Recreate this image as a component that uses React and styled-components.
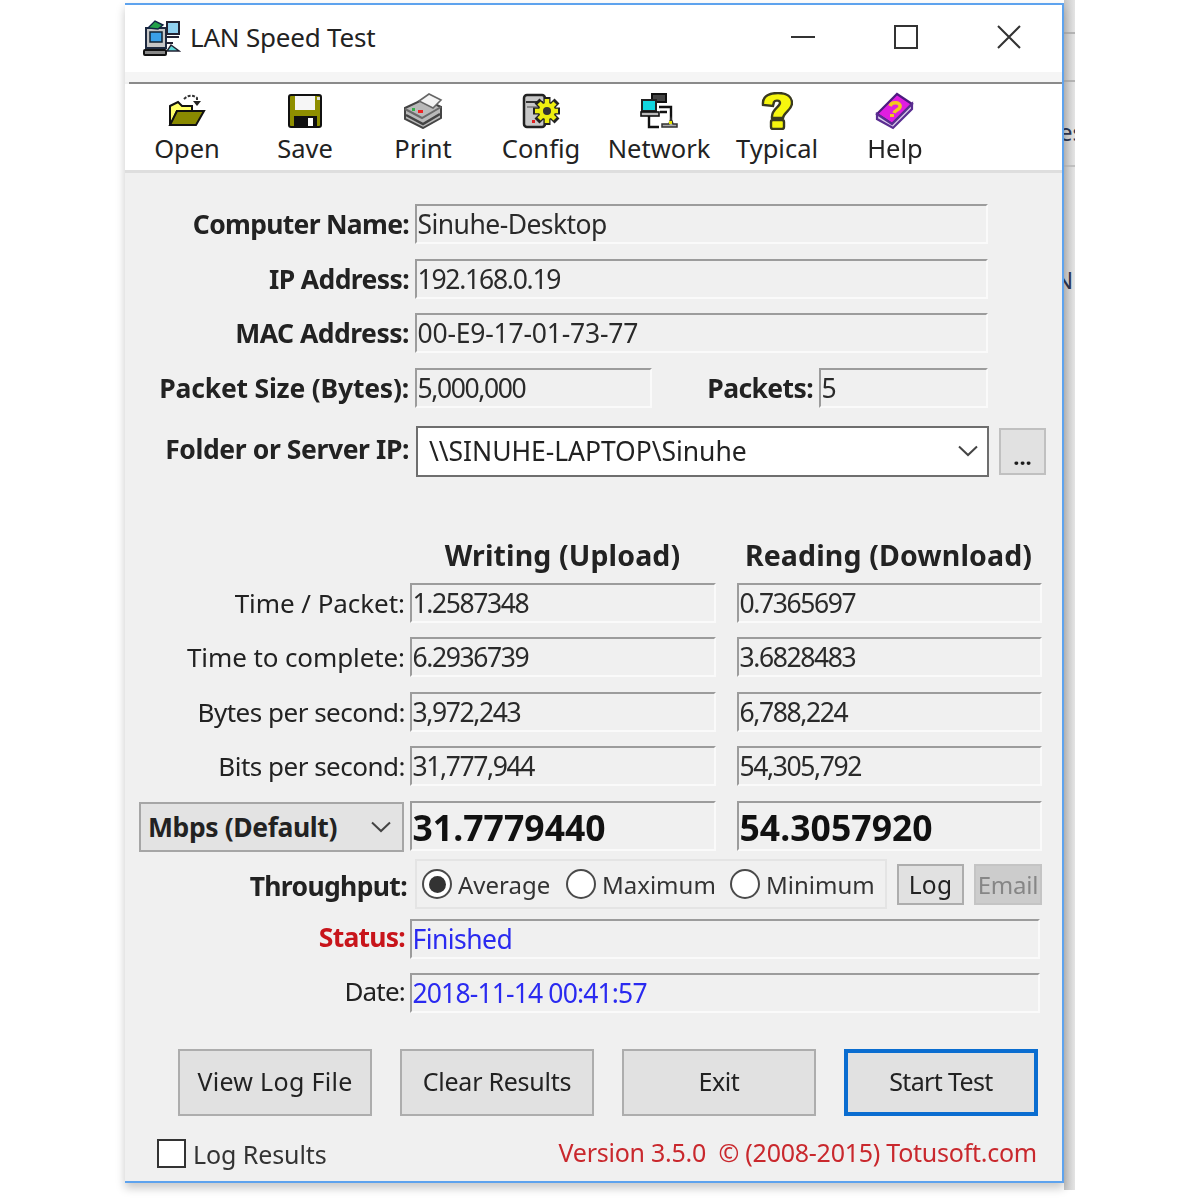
import React from "react"
import styled, { createGlobalStyle } from "styled-components"

const Global = createGlobalStyle`
  html, body { margin: 0; padding: 0; background: #fff; }
  body { font-family: "Noto Sans", "Open Sans", sans-serif; color: #1c1c1c; }
`

const Stage = styled.div`
  display: flex;
  align-items: flex-start;
  width: 1200px;
  height: 1200px;
  padding-left: 125px;
  box-sizing: border-box;
  overflow: hidden;
  filter: blur(0.55px);
`

const Win = styled.div`
  position: relative;
  z-index: 1;
  width: 939px;
  height: 1180px;
  margin-top: 3px;
  flex: none;
  box-sizing: border-box;
  border: 2px solid #5ea3ee;
  border-left-width: 0;
  background: #f0f0f0;
  box-shadow: 0 5px 9px rgba(0, 0, 0, 0.22);
  display: flex;
  flex-direction: column;
`

const Behind = styled.div`
  position: relative;
  width: 11px;
  height: 1190px;
  flex: none;
  overflow: hidden;
  background:
    linear-gradient(#b4b4b4, #b4b4b4) 0 32px / 100% 2px no-repeat,
    linear-gradient(#b4b4b4, #b4b4b4) 0 80px / 100% 2px no-repeat,
    linear-gradient(#c0c0c0, #c0c0c0) 0 165px / 100% 2px no-repeat,
    linear-gradient(90deg, #c6c6c6, #e4e4e4);
`

const BehindText = styled.span`
  position: absolute;
  left: ${p => p.$left}px;
  top: ${p => p.$top}px;
  font-size: 24px;
  line-height: 28px;
  color: #2c3550;
  white-space: nowrap;
`

const TitleBar = styled.div`
  height: 67px;
  flex: none;
  display: flex;
  align-items: center;
  background: #fff;
  padding: 0 2px 0 18px;
`

const AppIcon = styled.svg`
  width: 38px;
  height: 38px;
  flex: none;
  margin-top: -2px;
`

const TitleText = styled.div`
  margin: 0 0 4px 9px;
  font-size: 26px;
  letter-spacing: -0.2px;
  color: #222;
  flex: 1;
`

const WinBtn = styled.div`
  width: 103px;
  height: 50px;
  display: flex;
  align-items: center;
  justify-content: center;
  margin-top: -4px;
`

const TitleGap = styled.div`
  height: 10px;
  flex: none;
  background: #f5f5f5;
`

const TitleRule = styled.div`
  height: 2px;
  flex: none;
  margin-left: 4px;
  background: #8a8a8a;
`

const Toolbar = styled.div`
  height: 86px;
  flex: none;
  display: flex;
  padding-left: 3px;
  background: #fff;
  border-bottom: 3px solid #dedede;
`

const ToolBtn = styled.div`
  width: 118px;
  display: flex;
  flex-direction: column;
  align-items: center;
  padding-top: 8px;
`

const ToolIcon = styled.div`
  height: 38px;
  display: flex;
  align-items: center;
  justify-content: center;
`

const ToolLabel = styled.div`
  font-size: 25.5px;
  line-height: 36px;
  color: #222;
  white-space: nowrap;
`

const Body = styled.div`
  flex: 1;
  display: flex;
  flex-direction: column;
  padding-top: 31px;
`

const Row = styled.div`
  display: flex;
  align-items: center;
  height: ${p => p.$h || 40}px;
  margin-top: ${p => p.$mt || 0}px;
  margin-left: ${p => p.$ml || 0}px;
`

const Label = styled.div`
  width: ${p => p.$w}px;
  flex: none;
  text-align: right;
  font-size: ${p => (p.$bold ? 26.5 : 26)}px;
  font-weight: ${p => (p.$bold ? 700 : 400)};
  letter-spacing: ${p => p.$ls ?? 0}px;
  color: ${p => p.$color || "#222"};
  white-space: nowrap;
  margin-bottom: ${p => p.$up || 0}px;
  margin-top: ${p => p.$down || 0}px;
`

const Field = styled.div`
  box-sizing: border-box;
  width: ${p => p.$w}px;
  height: ${p => p.$h || 40}px;
  flex: none;
  margin-left: ${p => p.$ml ?? 6}px;
  padding-left: 0.5px;
  padding-top: ${p => (p.$big ? 2 : 0)}px;
  display: flex;
  align-items: center;
  border-style: solid;
  border-width: 2px;
  border-color: #9c9c9c #fafafa #fafafa #9c9c9c;
  font-size: ${p => (p.$big ? 35.5 : 26.5)}px;
  font-weight: ${p => (p.$big ? 700 : 400)};
  letter-spacing: ${p => p.$ls ?? -0.55}px;
  color: ${p => p.$color || (p.$big ? "#111" : "#2a2a2a")};
  white-space: nowrap;
  overflow: hidden;
`

const Combo = styled.div`
  box-sizing: border-box;
  width: 573px;
  height: 51px;
  flex: none;
  margin-left: 7px;
  padding: 0 8px 2px 11px;
  display: flex;
  align-items: center;
  justify-content: space-between;
  background: #fff;
  border: 2px solid #6e6e6e;
  font-size: 26.5px;
  letter-spacing: -0.05px;
  color: #222;
`

const DotsBtn = styled.div`
  box-sizing: border-box;
  width: 47px;
  height: 47px;
  flex: none;
  margin-left: 10px;
  display: flex;
  align-items: flex-end;
  justify-content: center;
  padding-bottom: 6px;
  background: #e1e1e1;
  border: 2px solid #c0c0c0;
  font-size: 22px;
  font-weight: 700;
  line-height: 22px;
`

const Heading = styled.div`
  width: ${p => p.$w}px;
  flex: none;
  margin-left: ${p => p.$ml}px;
  text-align: center;
  font-size: 28.5px;
  font-weight: 700;
  letter-spacing: 0.12px;
  color: #222;
  white-space: nowrap;
`

const UnitSelect = styled.div`
  box-sizing: border-box;
  width: 265px;
  height: 50px;
  flex: none;
  margin-top: 2px;
  padding: 0 10px 0 7px;
  display: flex;
  align-items: center;
  justify-content: space-between;
  background: #e3e3e3;
  border: 2px solid #a6a6a6;
  font-size: 26.5px;
  font-weight: 700;
  letter-spacing: -0.4px;
  color: #222;
`

const RadioGroup = styled.div`
  box-sizing: border-box;
  width: 472px;
  height: 50px;
  flex: none;
  margin-left: 8px;
  padding-left: 5px;
  display: flex;
  align-items: center;
  border: 2px solid #e4e4e4;
`

const RadioItem = styled.div`
  width: ${p => p.$w}px;
  flex: none;
  display: flex;
  align-items: center;
  gap: 6px;
  font-size: 24px;
  color: #333;
  white-space: nowrap;
`

const RadioMark = styled.div`
  box-sizing: border-box;
  width: 30px;
  height: 30px;
  flex: none;
  border-radius: 50%;
  border: 2.5px solid #4a4a4a;
  background: #fff;
  display: flex;
  align-items: center;
  justify-content: center;
  &::after {
    content: "";
    display: ${p => (p.$on ? "block" : "none")};
    width: 17px;
    height: 17px;
    border-radius: 50%;
    background: #333;
  }
`

const SmallBtn = styled.div`
  box-sizing: border-box;
  width: ${p => p.$w}px;
  height: 41px;
  flex: none;
  margin-left: ${p => p.$ml}px;
  display: flex;
  align-items: center;
  justify-content: center;
  background: ${p => (p.$off ? "#cccccc" : "#e1e1e1")};
  border: 2px solid ${p => (p.$off ? "#c4c4c4" : "#adadad")};
  font-size: ${p => (p.$off ? 24 : 24.5)}px;
  letter-spacing: ${p => (p.$off ? -0.2 : 0.2)}px;
  color: ${p => (p.$off ? "#868686" : "#222")};
`

const ActionRow = styled.div`
  display: flex;
  gap: 28px;
  margin-top: 36px;
  margin-left: 53px;
`

const ActionBtn = styled.div`
  box-sizing: border-box;
  width: 194px;
  height: 67px;
  padding-bottom: 4px;
  display: flex;
  align-items: center;
  justify-content: center;
  background: #e1e1e1;
  border: ${p => (p.$primary ? "4px solid #0a6dd0" : "2px solid #adadad")};
  font-size: 25px;
  letter-spacing: ${p => p.$ls}px;
  color: #222;
`

const Footer = styled.div`
  display: flex;
  align-items: center;
  justify-content: space-between;
  margin-top: 21.5px;
  margin-left: 32px;
  margin-right: 25px;
  height: 32px;
`

const LogCheck = styled.div`
  display: flex;
  align-items: center;
  gap: 7px;
  font-size: 25px;
  letter-spacing: -0.1px;
  color: #333;
`

const CheckBox = styled.div`
  box-sizing: border-box;
  width: 29px;
  height: 29px;
  background: #fff;
  border: 2px solid #333;
`

const Version = styled.div`
  font-size: 25px;
  letter-spacing: -0.25px;
  color: #c9282d;
  margin-top: -4px;
  white-space: pre;
`

const Chevron = () => (
  <svg width="22" height="12" viewBox="0 0 22 12" fill="none" stroke="#444" strokeWidth="2">
    <polyline points="2,1.5 11,10 20,1.5" />
  </svg>
)

const OpenIcon = () => (
  <svg width="38" height="36" viewBox="0 0 38 36">
    <path d="M16 6 Q22 0 29 5 L29 9" fill="none" stroke="#333" strokeWidth="2" strokeDasharray="3 1.5" />
    <path d="M25 8 L33 8 L29 13 Z" fill="#222" />
    <path d="M2 13 L10 9 L14 13 L24 13 L24 18 L9 18 L3 31 L2 31 Z" fill="#ffff66" stroke="#111" strokeWidth="2" />
    <path d="M9 18 L36 18 L28 32 L2 32 Z" fill="#8a8a00" stroke="#111" strokeWidth="2" />
  </svg>
)

const SaveIcon = () => (
  <svg width="36" height="36" viewBox="0 0 36 36">
    <rect x="2" y="2" width="32" height="32" rx="2" fill="#8f8f00" stroke="#111" strokeWidth="2" />
    <rect x="8" y="3" width="20" height="14" fill="#f6f6f6" />
    <rect x="30" y="4" width="3" height="3" fill="#ddd" />
    <rect x="7" y="23" width="23" height="10" fill="#111" />
    <rect x="21" y="25" width="5" height="8" fill="#fff" />
  </svg>
)

const PrintIcon = () => (
  <svg width="40" height="36" viewBox="0 0 40 36">
    <path d="M2 15 L21 6 L38 14 L38 25 L20 35 L2 26 Z" fill="#b9b9b9" stroke="#444" strokeWidth="2" />
    <path d="M2 16 L19 25 L38 14" fill="none" stroke="#6a6a6a" strokeWidth="2" />
    <path d="M3 22 L20 31 L37 21" fill="none" stroke="#444" strokeWidth="2.5" />
    <path d="M16 8 L26 1 L38 7 L30 15 Z" fill="#f4f4f4" stroke="#666" strokeWidth="1.6" />
    <rect x="9" y="15" width="3" height="3" fill="#35b04a" />
    <rect x="15" y="17" width="5" height="3" fill="#ee2222" />
  </svg>
)

const ConfigIcon = () => (
  <svg width="38" height="36" viewBox="0 0 38 36">
    <rect x="2" y="2" width="21" height="32" rx="3" fill="#c8c8c8" stroke="#222" strokeWidth="2.5" />
    <path d="M4 9 L21 9" stroke="#333" strokeWidth="2" />
    <path d="M5 14 L18 14" stroke="#777" strokeWidth="1.5" />
    <rect x="10" y="27" width="3" height="3" fill="#e02020" />
    <path d="M25 4 L25 32 M11 18 L38 18 M15 8 L35 28 M35 8 L15 28" stroke="#222" strokeWidth="7" />
    <path d="M25 6 L25 30 M13 18 L36 18 M17 10 L33 26 M33 10 L17 26" stroke="#eeee10" strokeWidth="4.5" />
    <circle cx="25" cy="18" r="8" fill="#eeee10" />
    <circle cx="25" cy="18" r="4" fill="#333" />
  </svg>
)

const NetworkIcon = () => (
  <svg width="38" height="36" viewBox="0 0 38 36">
    <rect x="12" y="1" width="14" height="8" fill="#444" stroke="#111" strokeWidth="2" />
    <rect x="2" y="7" width="14" height="11" fill="#12d6e0" stroke="#222" strokeWidth="2" />
    <rect x="1" y="19" width="18" height="4" fill="#bbb" stroke="#111" strokeWidth="1.6" />
    <path d="M9 23 L9 34 L19 34 M19 14 L31 14 L31 26 M20 19 L27 19" fill="none" stroke="#111" strokeWidth="2.4" />
    <path d="M22 34 L37 34 L37 31 L33 31 L31 25 L29 31 L22 31 Z" fill="#aaa" stroke="#333" strokeWidth="1.5" />
    <rect x="29" y="28" width="3" height="3" fill="#e6e600" />
  </svg>
)

const TypicalIcon = () => (
  <svg width="32" height="38" viewBox="0 0 32 38">
    <path d="M2 13 C1 3 10 1 17 1 C26 1 31 5 31 11 C31 18 23 20 22 26 L11 26 C10 17 19 15 19 11 C19 8 14 8 13 10 L12 14 Z" fill="#f6f60e" stroke="#3a3a20" strokeWidth="2.4" />
    <rect x="10" y="28" width="13" height="9" rx="2" fill="#f6f60e" stroke="#3a3a20" strokeWidth="2.4" />
  </svg>
)

const HelpIcon = () => (
  <svg width="40" height="38" viewBox="0 0 40 38">
    <path d="M2 22 L22 2 L37 12 L17 32 Z" fill="#e01ee0" stroke="#4d1a80" strokeWidth="2.2" />
    <path d="M2 22 L2 27 L18 36 L37 17 L37 12 L17 32 Z" fill="#d9c9ea" stroke="#5a2d91" strokeWidth="2.2" />
    <path d="M15 14 C17 9 26 10 25 15 C24 18 20 18 19 21" fill="none" stroke="#f2c81e" strokeWidth="3.6" />
    <rect x="15" y="22" width="4" height="3" fill="#f2c81e" />
  </svg>
)

const tools = [
  { label: "Open", Icon: OpenIcon },
  { label: "Save", Icon: SaveIcon },
  { label: "Print", Icon: PrintIcon },
  { label: "Config", Icon: ConfigIcon },
  { label: "Network", Icon: NetworkIcon },
  { label: "Typical", Icon: TypicalIcon },
  { label: "Help", Icon: HelpIcon },
]

const results = [
  { label: "Time / Packet:", ls: -0.05, write: "1.2587348", read: "0.7365697" },
  { label: "Time to complete:", ls: -0.1, write: "6.2936739", read: "3.6828483" },
  { label: "Bytes per second:", ls: -0.5, write: "3,972,243", read: "6,788,224" },
  { label: "Bits per second:", ls: -0.5, write: "31,777,944", read: "54,305,792" },
]

const actions = [
  { label: "View Log File", ls: 0.3 },
  { label: "Clear Results", ls: -0.25 },
  { label: "Exit", ls: -0.4 },
  { label: "Start Test", ls: -0.65, primary: true },
]

function App() {
  return (
    <Stage>
      <Global />
      <Win>
        <TitleBar>
          <AppIcon viewBox="0 0 38 38">
            <rect x="3" y="9" width="20" height="20" fill="#c6c6c6" stroke="#1e2a40" strokeWidth="2" />
            <rect x="7" y="13" width="12" height="10" fill="#3aa0e8" stroke="#123" strokeWidth="1.5" />
            <path d="M5 9 L12 2 L20 6 L15 10 Z" fill="#22a04a" stroke="#124" strokeWidth="1.4" />
            <rect x="24" y="3" width="12" height="12" fill="#8fd0f0" stroke="#223" strokeWidth="2" />
            <path d="M23 18 L36 18 M23 24 L30 24" stroke="#223" strokeWidth="2" />
            <path d="M28 26 L36 32 L24 32 Z" fill="#5fd8d8" stroke="#223" strokeWidth="1.4" />
            <rect x="1" y="31" width="22" height="5" rx="1" fill="#888" stroke="#111" strokeWidth="2" />
          </AppIcon>
          <TitleText>LAN Speed Test</TitleText>
          <WinBtn>
            <svg width="24" height="24" viewBox="0 0 24 24"><path d="M0 12 L24 12" stroke="#333" strokeWidth="2" /></svg>
          </WinBtn>
          <WinBtn>
            <svg width="24" height="24" viewBox="0 0 24 24"><rect x="1" y="1" width="22" height="22" fill="none" stroke="#333" strokeWidth="2" /></svg>
          </WinBtn>
          <WinBtn>
            <svg width="24" height="24" viewBox="0 0 24 24"><path d="M1 1 L23 23 M23 1 L1 23" stroke="#333" strokeWidth="2" /></svg>
          </WinBtn>
        </TitleBar>
        <TitleGap />
        <TitleRule />
        <Toolbar>
          {tools.map(({ label, Icon }) => (
            <ToolBtn key={label}>
              <ToolIcon><Icon /></ToolIcon>
              <ToolLabel>{label}</ToolLabel>
            </ToolBtn>
          ))}
        </Toolbar>
        <Body>
          <Row>
            <Label $w={284} $bold $ls={-0.7}>Computer Name:</Label>
            <Field $w={573} $ml={6}>Sinuhe-Desktop</Field>
          </Row>
          <Row $mt={14.5}>
            <Label $w={284} $bold $ls={-0.6}>IP Address:</Label>
            <Field $w={573} $ml={6} $ls={-1.25}>192.168.0.19</Field>
          </Row>
          <Row $mt={14.5}>
            <Label $w={284} $bold $ls={-0.5}>MAC Address:</Label>
            <Field $w={573} $ml={6} $ls={-0.2}>00-E9-17-01-73-77</Field>
          </Row>
          <Row $mt={14.5}>
            <Label $w={284} $bold $ls={-0.2}>Packet Size (Bytes):</Label>
            <Field $w={237} $ml={6} $ls={-1.4}>5,000,000</Field>
            <Label $w={161} $bold $ls={-0.6}>Packets:</Label>
            <Field $w={169} $ml={6}>5</Field>
          </Row>
          <Row $mt={19} $h={50}>
            <Label $w={284} $bold $ls={-0.4} $up={6}>Folder or Server IP:</Label>
            <Combo>
              {"\\\\SINUHE-LAPTOP\\Sinuhe"}
              <Chevron />
            </Combo>
            <DotsBtn>...</DotsBtn>
          </Row>
          <Row $mt={60} $h={36}>
            <Heading $w={305} $ml={285}>Writing (Upload)</Heading>
            <Heading $w={305} $ml={21}>Reading (Download)</Heading>
          </Row>
          {results.map(({ label, ls, write, read }, i) => (
            <Row key={label} $mt={i === 0 ? 10 : 14.5}>
              <Label $w={280} $ls={ls}>{label}</Label>
              <Field $w={306} $ml={5} $ls={-1.4}>{write}</Field>
              <Field $w={305} $ml={21} $ls={-1.4}>{read}</Field>
            </Row>
          ))}
          <Row $mt={14} $h={51} $ml={14}>
            <UnitSelect>
              Mbps (Default)
              <Chevron />
            </UnitSelect>
            <Field $w={306} $h={50} $ml={6} $ls={0.05} $big>31.7779440</Field>
            <Field $w={305} $h={50} $ml={21} $ls={0.05} $big>54.3057920</Field>
          </Row>
          <Row $mt={8} $h={50}>
            <Label $w={282} $bold $ls={-0.65} $down={4}>Throughput:</Label>
            <RadioGroup>
              <RadioItem $w={144}><RadioMark $on />Average</RadioItem>
              <RadioItem $w={164}><RadioMark />Maximum</RadioItem>
              <RadioItem $w={150}><RadioMark />Minimum</RadioItem>
            </RadioGroup>
            <SmallBtn $w={67} $ml={10}>Log</SmallBtn>
            <SmallBtn $w={68} $ml={10} $off>Email</SmallBtn>
          </Row>
          <Row $mt={10}>
            <Label $w={280} $bold $color="#c8151b" $ls={-0.75} $up={4}>Status:</Label>
            <Field $w={630} $ml={5} $color="#2a2af0">Finished</Field>
          </Row>
          <Row $mt={14}>
            <Label $w={280} $ls={-0.8} $up={4}>Date:</Label>
            <Field $w={630} $ml={5} $color="#2a2af0" $ls={-0.85}>2018-11-14 00:41:57</Field>
          </Row>
          <ActionRow>
            {actions.map(({ label, ls, primary }) => (
              <ActionBtn key={label} $ls={ls} $primary={primary}>{label}</ActionBtn>
            ))}
          </ActionRow>
          <Footer>
            <LogCheck>
              <CheckBox />
              Log Results
            </LogCheck>
            <Version>{"Version 3.5.0  © (2008-2015) Totusoft.com"}</Version>
          </Footer>
        </Body>
      </Win>
      <Behind>
        <BehindText $left={-5} $top={118}>es</BehindText>
        <BehindText $left={-9} $top={266}>N</BehindText>
      </Behind>
    </Stage>
  )
}

export default App
